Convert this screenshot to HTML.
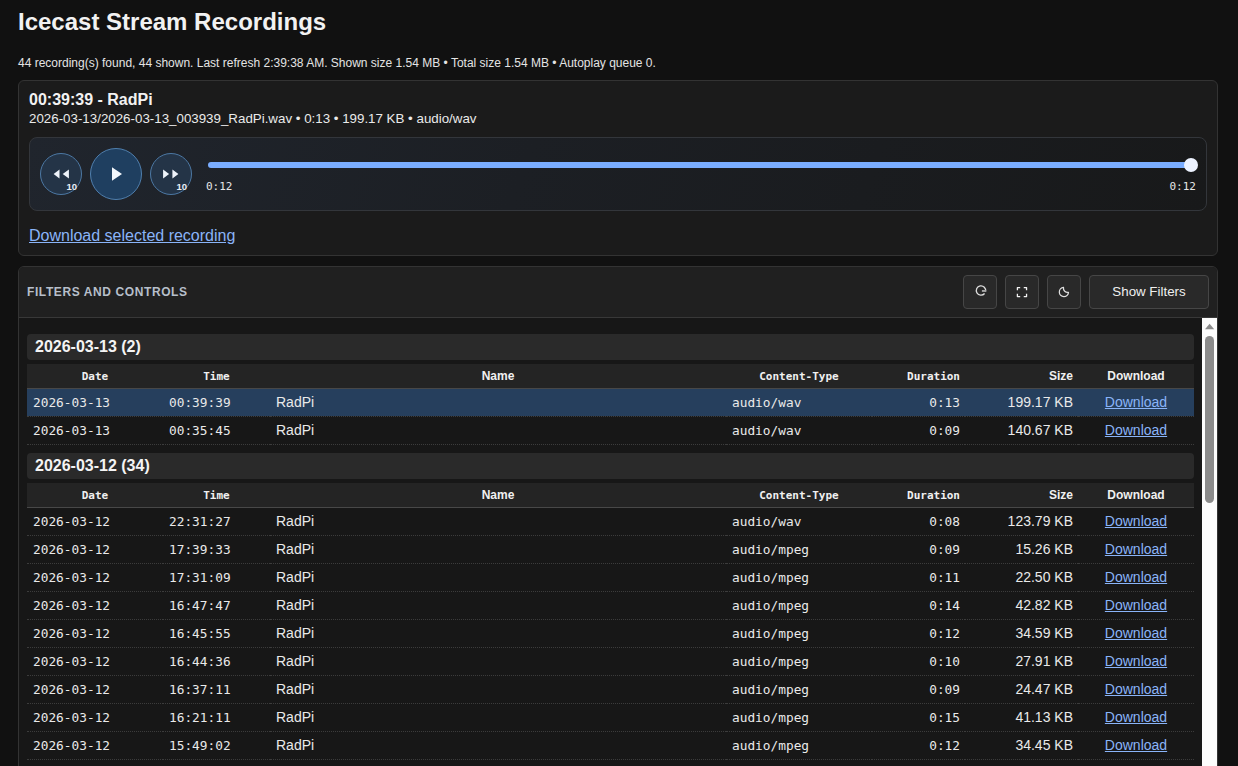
<!DOCTYPE html>
<html lang="en">
<head>
<meta charset="utf-8">
<title>Icecast Stream Recordings</title>
<style>
*{box-sizing:border-box}
html,body{margin:0;padding:0}
body{width:1238px;height:766px;overflow:hidden;background:#111111;color:#eeeeee;
  font-family:"Liberation Sans",Arial,sans-serif;position:relative}
.mono{font-family:"DejaVu Sans Mono","Liberation Mono",monospace}
a{color:#8ab4f8;text-decoration:underline}
h1{position:absolute;left:18px;top:8px;margin:0;font-size:24px;line-height:28px;font-weight:bold;color:#f2f2f2;white-space:nowrap}
.status{position:absolute;left:18px;top:56px;font-size:12px;line-height:14px;color:#e4e4e4;white-space:nowrap}
.panel{position:absolute;left:18px;width:1200px;border:1px solid #333333;border-radius:6px;background:#1b1b1b}
#p1{top:80px;height:176px}
#p1 .t{position:absolute;left:10px;top:9px;font-size:16px;line-height:20px;font-weight:bold;color:#f2f2f2;white-space:nowrap}
#p1 .s{position:absolute;left:10px;top:29.6px;font-size:13.33px;line-height:16px;color:#eaeaea;white-space:nowrap}
#player{position:absolute;left:10px;top:56px;width:1178px;height:74px;border:1px solid #33363b;border-radius:8px;
  background:linear-gradient(110deg,#20252d 0%,#1c1f24 42%,#18191a 100%)}
.cb{position:absolute;border-radius:50%;border:1px solid #4c78a4;background:#243447}
.cb.sm{width:42px;height:42px;top:15px}
.cb.lg{width:52px;height:52px;top:10px;left:60px;background:#1f3f60;border-color:#4f7fae}
.cb svg{position:absolute;left:0;top:0}
.cb .n{position:absolute;right:4px;bottom:2.5px;font-size:9.5px;line-height:10px;font-weight:bold;color:#e8eef6}
#track{position:absolute;left:178px;top:24px;width:988px;height:6px;border-radius:3px;background:#7aadff}
#thumb{position:absolute;left:1154px;top:20px;width:14px;height:14px;border-radius:50%;background:#edf3ff}
.tm{position:absolute;top:42px;font-size:11px;line-height:14px;color:#e6e6e6}
#dl{position:absolute;left:10px;top:145px;font-size:16px;line-height:20px;white-space:nowrap}
#p2{top:266px;height:520px;background:#171717;border-radius:6px 6px 0 0}
#hdr{position:absolute;left:0;top:0;width:1198px;height:51px;background:#202020;border-bottom:1px solid #383838;border-radius:5px 5px 0 0}
#hdr .lbl{position:absolute;left:8px;top:18px;font-size:12px;line-height:14px;font-weight:bold;letter-spacing:0.6px;color:#b7bfca;white-space:nowrap}
.btn{position:absolute;top:8px;height:34px;width:34px;border:1px solid #464646;border-radius:4px;background:#292929;color:#efefef;
  font-size:13.33px;line-height:31px;text-align:center}
.btn svg{position:absolute;left:0;top:0}
#list{position:absolute;left:0;top:51px;width:1183px;height:470px;overflow:hidden}
#sb{position:absolute;left:1183px;top:51px;width:15px;height:470px;background:#fcfcfc}
#sb .th{position:absolute;left:3px;top:18px;width:9px;height:167px;border-radius:4.5px;background:#8b8b8b}
.gh{position:absolute;left:8px;width:1167px;height:26px;background:#2a2a2a;border-radius:4px;font-size:16px;line-height:26px;font-weight:bold;
  padding-left:8px;color:#f4f4f4;white-space:nowrap}
table{position:absolute;left:8px;width:1167px;border-collapse:collapse;table-layout:fixed}
th{height:24px;background:#242424;border-bottom:1px solid #484848;font-size:12px;font-weight:bold;padding:0 6px;color:#f0f0f0;text-align:center;white-space:nowrap}
th.mono{font-size:11px;padding-top:2px}
td{height:28px;border-bottom:1px dotted #3c3c3c;font-size:14px;padding:0 6px;color:#eaeaea;white-space:nowrap;text-align:left}
td.mono{font-size:12.8px}
.r{text-align:right;padding-right:5px}
.c{text-align:center}
tr.sel td{background:#263f5d}
</style>
</head>
<body>
<h1>Icecast Stream Recordings</h1>
<div class="status">44 recording(s) found, 44 shown. Last refresh 2:39:38 AM. Shown size 1.54 MB • Total size 1.54 MB • Autoplay queue 0.</div>

<div class="panel" id="p1">
  <div class="t">00:39:39 - RadPi</div>
  <div class="s">2026-03-13/2026-03-13_003939_RadPi.wav • 0:13 • 199.17 KB • audio/wav</div>
  <div id="player">
    <div class="cb sm" style="left:10px">
      <svg width="40" height="40" viewBox="0 0 40 40"><path d="M18.5 15.4v9l-5.9-4.5zM27.9 15.4v9l-6.2-4.5z" fill="#eef3fa"/></svg>
      <span class="n">10</span>
    </div>
    <div class="cb lg">
      <svg width="50" height="50" viewBox="0 0 50 50"><path d="M21 18.3v13.5l10-6.75z" fill="#f2f6fb"/></svg>
    </div>
    <div class="cb sm" style="left:120px">
      <svg width="40" height="40" viewBox="0 0 40 40"><path d="M12.1 15.4v9.2l6-4.6zM21.4 15.4v9.2l6-4.6z" fill="#eef3fa"/></svg>
      <span class="n">10</span>
    </div>
    <div id="track"></div>
    <div id="thumb"></div>
    <div class="tm mono" style="left:176px">0:12</div>
    <div class="tm mono" style="right:10px">0:12</div>
  </div>
  <a id="dl">Download selected recording</a>
</div>

<div class="panel" id="p2">
  <div id="hdr">
    <div class="lbl">FILTERS AND CONTROLS</div>
    <div class="btn" style="left:944px"><svg width="32" height="32" viewBox="0 0 32 32"><path d="M20.6 17.52A4.7 4.7 0 1 1 21.63 15.3" fill="none" stroke="#dedede" stroke-width="1.3"/><path d="M17.9 14h4.3v1.9h-4.3z" fill="#a8a8a8"/></svg></div>
    <div class="btn" style="left:986px"><svg width="32" height="32" viewBox="0 0 32 32"><path d="M11.4 14.3v-2.75h2.8M17.75 11.55h2.8v2.75M20.55 17.8v2.75h-2.8M14.2 20.55h-2.8v-2.75" fill="none" stroke="#f4f4f4" stroke-width="1.3" stroke-linejoin="round"/></svg></div>
    <div class="btn" style="left:1028px"><svg width="32" height="32" viewBox="0 0 32 32"><path d="M15.5 11.4A4.6 4.6 0 1 0 20.5 16.4A4.3 4.3 0 0 1 15.5 11.4z" fill="none" stroke="#dedede" stroke-width="1.25" stroke-linejoin="round"/></svg></div>
    <div class="btn" style="left:1070px;width:120px">Show Filters</div>
  </div>
  <div id="list">
  <!--LIST-->
<div class="gh" style="top:16px">2026-03-13 (2)</div>
<table style="top:46px"><colgroup><col style="width:136px"><col style="width:107px"><col style="width:456px"><col style="width:146px"><col style="width:93px"><col style="width:113px"><col style="width:116px"></colgroup><tr><th class="mono">Date</th><th class="mono">Time</th><th>Name</th><th class="mono">Content-Type</th><th class="mono r">Duration</th><th class="r">Size</th><th>Download</th></tr><tr class="sel"><td class="mono">2026-03-13</td><td class="mono">00:39:39</td><td>RadPi</td><td class="mono">audio/wav</td><td class="mono r">0:13</td><td class="r">199.17 KB</td><td class="c"><a>Download</a></td></tr><tr><td class="mono">2026-03-13</td><td class="mono">00:35:45</td><td>RadPi</td><td class="mono">audio/wav</td><td class="mono r">0:09</td><td class="r">140.67 KB</td><td class="c"><a>Download</a></td></tr></table>
<div class="gh" style="top:135px">2026-03-12 (34)</div>
<table style="top:165px"><colgroup><col style="width:136px"><col style="width:107px"><col style="width:456px"><col style="width:146px"><col style="width:93px"><col style="width:113px"><col style="width:116px"></colgroup><tr><th class="mono">Date</th><th class="mono">Time</th><th>Name</th><th class="mono">Content-Type</th><th class="mono r">Duration</th><th class="r">Size</th><th>Download</th></tr><tr><td class="mono">2026-03-12</td><td class="mono">22:31:27</td><td>RadPi</td><td class="mono">audio/wav</td><td class="mono r">0:08</td><td class="r">123.79 KB</td><td class="c"><a>Download</a></td></tr><tr><td class="mono">2026-03-12</td><td class="mono">17:39:33</td><td>RadPi</td><td class="mono">audio/mpeg</td><td class="mono r">0:09</td><td class="r">15.26 KB</td><td class="c"><a>Download</a></td></tr><tr><td class="mono">2026-03-12</td><td class="mono">17:31:09</td><td>RadPi</td><td class="mono">audio/mpeg</td><td class="mono r">0:11</td><td class="r">22.50 KB</td><td class="c"><a>Download</a></td></tr><tr><td class="mono">2026-03-12</td><td class="mono">16:47:47</td><td>RadPi</td><td class="mono">audio/mpeg</td><td class="mono r">0:14</td><td class="r">42.82 KB</td><td class="c"><a>Download</a></td></tr><tr><td class="mono">2026-03-12</td><td class="mono">16:45:55</td><td>RadPi</td><td class="mono">audio/mpeg</td><td class="mono r">0:12</td><td class="r">34.59 KB</td><td class="c"><a>Download</a></td></tr><tr><td class="mono">2026-03-12</td><td class="mono">16:44:36</td><td>RadPi</td><td class="mono">audio/mpeg</td><td class="mono r">0:10</td><td class="r">27.91 KB</td><td class="c"><a>Download</a></td></tr><tr><td class="mono">2026-03-12</td><td class="mono">16:37:11</td><td>RadPi</td><td class="mono">audio/mpeg</td><td class="mono r">0:09</td><td class="r">24.47 KB</td><td class="c"><a>Download</a></td></tr><tr><td class="mono">2026-03-12</td><td class="mono">16:21:11</td><td>RadPi</td><td class="mono">audio/mpeg</td><td class="mono r">0:15</td><td class="r">41.13 KB</td><td class="c"><a>Download</a></td></tr><tr><td class="mono">2026-03-12</td><td class="mono">15:49:02</td><td>RadPi</td><td class="mono">audio/mpeg</td><td class="mono r">0:12</td><td class="r">34.45 KB</td><td class="c"><a>Download</a></td></tr><tr><td class="mono">2026-03-12</td><td class="mono">15:41:18</td><td>RadPi</td><td class="mono">audio/mpeg</td><td class="mono r">0:10</td><td class="r">28.02 KB</td><td class="c"><a>Download</a></td></tr></table>
<!--/LIST-->
  </div>
  <div id="sb"><svg style="position:absolute;left:0;top:0" width="15" height="16" viewBox="0 0 15 16"><path d="M3 11.2h9.2L7.6 5.8z" fill="#8b8b8b"/></svg><div class="th"></div></div>
</div>
</body>
</html>
